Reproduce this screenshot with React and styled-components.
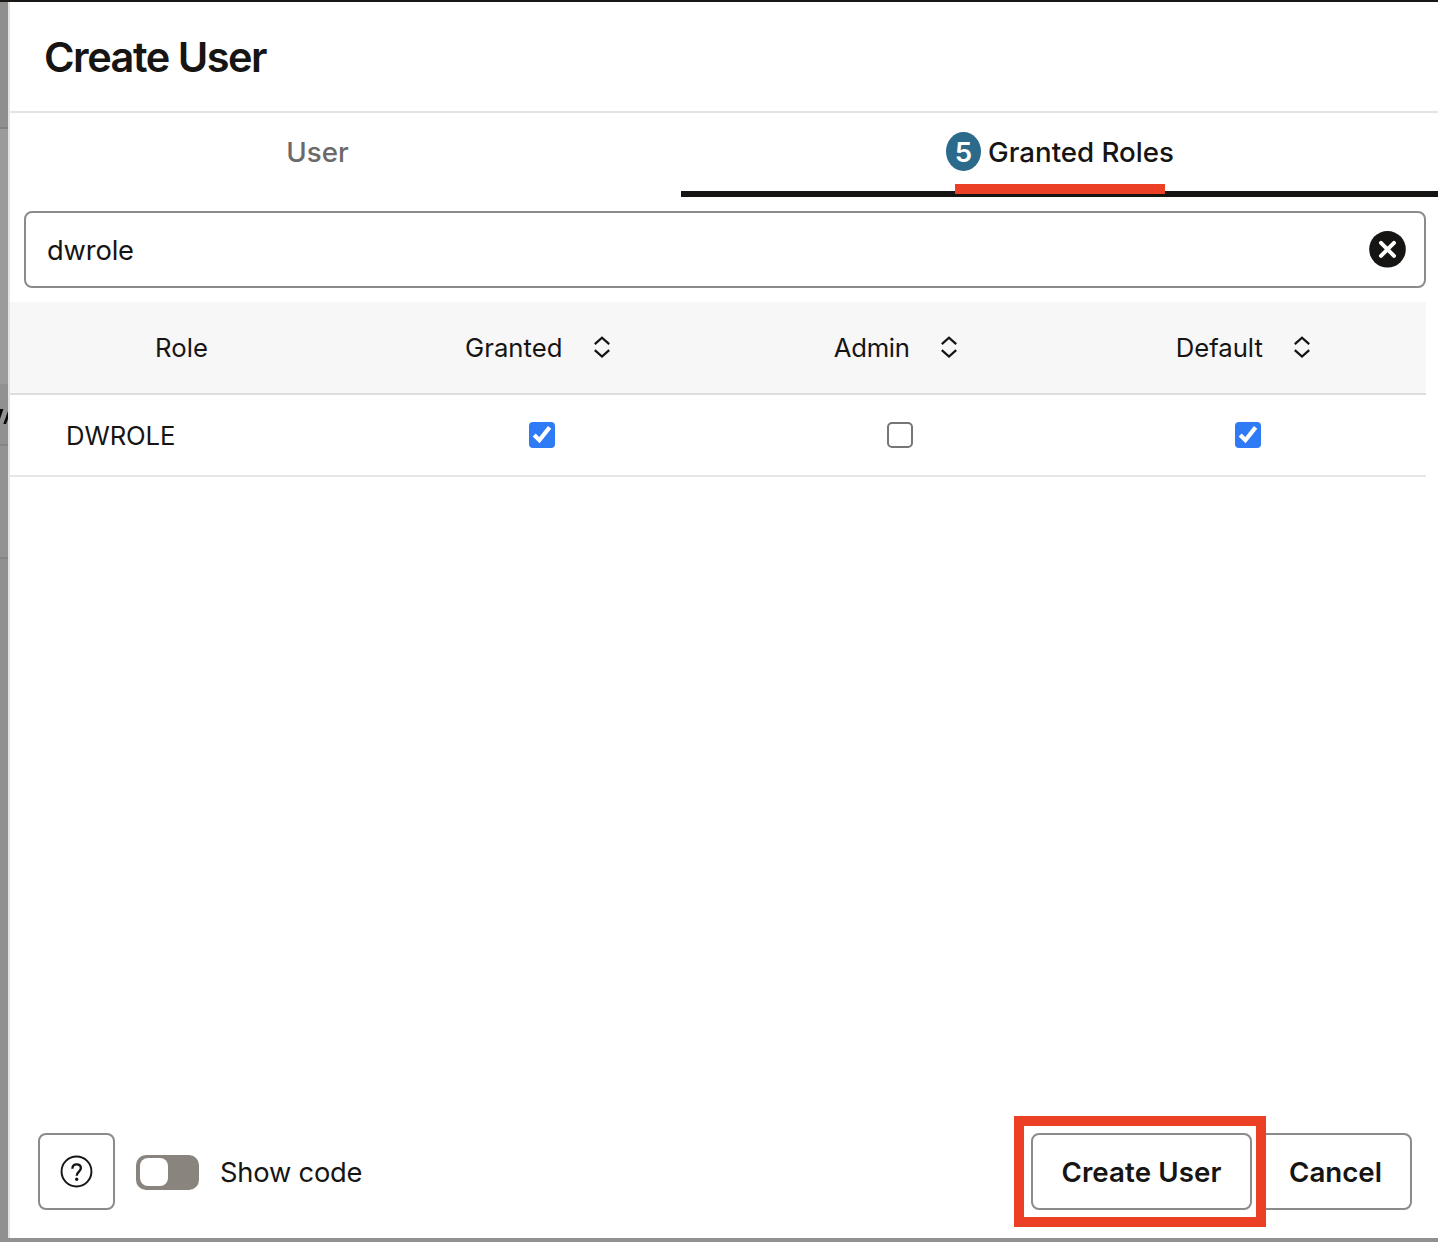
import React, { useState } from "react";
import styled, { createGlobalStyle } from "styled-components";

const ink = "#161513";
const outline = "#8b8b8b";
const marker = "#ec4026";

const GlobalStyle = createGlobalStyle`
  *, *::before, *::after { box-sizing: border-box; }
  html, body { margin: 0; padding: 0; overflow: hidden; }
  body { font-family: Inter, "Liberation Sans", sans-serif; color: ${ink}; }
  button, input { font: inherit; color: inherit; }
`;

const Screen = styled.div`
  display: flex;
  width: 1438px;
  height: 1242px;
  border-top: 2px solid #1a1816;
  border-bottom: 4px solid #919191;
  background: #fff;
`;

const Backdrop = styled.aside`
  display: flex;
  flex-direction: column;
  flex: 0 0 8px;
  overflow: hidden;
`;

const Strip = styled.div`
  flex: 0 0 ${(p) => p.$height}px;
  background: ${(p) => p.$color};
  border-bottom: ${(p) => (p.$line ? `2px solid ${p.$line}` : "none")};
  overflow: hidden;
`;

const ClippedLabel = styled.svg`
  display: block;
  margin-top: 23px;
`;

const Drawer = styled.main`
  display: flex;
  flex-direction: column;
  flex: 1;
  min-width: 0;
  border-left: 2px solid #e4e4e4;
`;

const Header = styled.header`
  display: flex;
  align-items: center;
  height: 111px;
  padding: 0 34px;
  border-bottom: 2px solid #e4e4e4;
`;

const Title = styled.h1`
  margin: 0;
  font-size: 41.5px;
  font-weight: 600;
  line-height: 50px;
  letter-spacing: -1.5px;
`;

const Tabs = styled.nav`
  display: flex;
  height: 84px;
`;

const Tab = styled.button`
  display: flex;
  align-items: flex-start;
  justify-content: center;
  gap: 7px;
  flex: 0 0 ${(p) => p.$width}px;
  padding: 19px ${(p) => p.$trail || 0}px 0 ${(p) => p.$lead || 0}px;
  border: 0;
  border-bottom: 6px solid ${(p) => (p.$active ? ink : "transparent")};
  background: none;
  color: ${(p) => (p.$active ? ink : "#6b6a69")};
  font-size: 27.7px;
  font-weight: 500;
  line-height: 41px;
  position: relative;
  white-space: nowrap;
`;

const Count = styled.span`
  width: 35px;
  height: 39px;
  border-radius: 50%;
  background: #2c6a8c;
  color: #fff;
  text-align: center;
  font-weight: 600;
`;

const Underscore = styled.span`
  position: absolute;
  left: 274px;
  bottom: -3px;
  width: 210px;
  height: 10px;
  background: ${marker};
`;

const SearchBox = styled.label`
  display: flex;
  align-items: center;
  height: 77px;
  margin: 14px 12px 14px 14px;
  padding: 0 18px 0 21px;
  border: 2px solid ${outline};
  border-radius: 8px;
`;

const SearchInput = styled.input`
  flex: 1;
  padding: 2px 0 0;
  border: 0;
  outline: 0;
  background: none;
  font-size: 27.3px;
  line-height: 40px;
  letter-spacing: -0.15px;
`;

const PlainButton = styled.button`
  display: flex;
  padding: 0 0 1px;
  border: 0;
  background: none;
`;

const Table = styled.section`
  margin-right: 12px;
`;

const Row = styled.div`
  display: grid;
  grid-template-columns: 342px 380px 336px 358px;
  align-items: center;
  height: ${(p) => (p.$head ? 93 : 82)}px;
  border-bottom: 2px solid ${(p) => (p.$head ? "#dedede" : "#e6e6e6")};
  background: ${(p) => (p.$head ? "#f7f7f7" : "#fff")};
  font-size: 25.7px;
  line-height: 36px;
`;

const HeadCell = styled.div`
  display: flex;
  align-items: center;
  justify-content: center;
  gap: 30.5px;
  padding-left: 1px;
  padding-right: ${(p) => p.$trail || 0}px;
  letter-spacing: ${(p) => p.$track || 0}px;

  svg {
    margin-bottom: 1px;
  }
`;

const NameCell = styled.div`
  padding: 2px 0 0 56px;
  letter-spacing: -0.1px;
`;

const CheckCell = styled.div`
  display: flex;
  justify-content: center;
  padding-left: ${(p) => p.$nudge || 0}px;
`;

const CheckBox = styled.button`
  display: flex;
  width: 26px;
  height: 26px;
  padding: 0;
  border: ${(p) => (p.$on ? "0" : "2px solid #767676")};
  border-radius: ${(p) => (p.$on ? 4 : 5)}px;
  background: ${(p) => (p.$on ? "#2f7bf6" : "#fff")};
`;

const Footer = styled.footer`
  display: flex;
  align-items: center;
  height: 77px;
  margin: auto 26px 28px 28px;
`;

const Button = styled.button`
  display: flex;
  align-items: center;
  justify-content: center;
  width: ${(p) => p.$width}px;
  height: 77px;
  padding: 0;
  border: 2px solid ${outline};
  border-radius: 8px;
  background: #fff;
  font-size: 27.7px;
  font-weight: 600;
  line-height: 34px;
  letter-spacing: ${(p) => p.$track || 0}px;
  white-space: nowrap;
`;

const Switch = styled.button`
  display: flex;
  align-items: center;
  width: 63px;
  height: 35px;
  margin: 1px 21px 0;
  padding: 0 4px;
  border: 0;
  border-radius: 10px;
  background: #8a847f;
`;

const Knob = styled.span`
  width: 28px;
  height: 28px;
  border-radius: 8px;
  background: #fff;
`;

const SwitchLabel = styled.span`
  padding-top: 2px;
  font-size: 27.3px;
  line-height: 40px;
  letter-spacing: -0.2px;
`;

const Actions = styled.div`
  display: flex;
  gap: 7px;
  margin-left: auto;
`;

const Callout = styled.div`
  position: relative;
  z-index: 1;
  &::after {
    content: "";
    position: absolute;
    inset: -17px -14px -17px -17px;
    border: 10px solid ${marker};
    pointer-events: none;
  }
`;

const SortIcon = () => (
  <svg width="18" height="24" viewBox="0 0 18 24" fill="none" stroke={ink} strokeWidth="2.3">
    <path d="M1.8 9.1 9 2.7l7.2 6.4M1.8 15.1 9 21.5l7.2-6.4" />
  </svg>
);

const TickIcon = () => (
  <svg width="26" height="26" viewBox="0 0 26 26" fill="none" stroke="#fff" strokeWidth="4.2">
    <path d="m5.2 13 5.2 5.2L20.6 5.4" />
  </svg>
);

const ClearIcon = () => (
  <svg width="37" height="37" viewBox="0 0 37 37">
    <circle cx="18.5" cy="18.3" r="18.3" fill={ink} />
    <path d="m12 11.8 13 13m0-13-13 13" stroke="#fff" strokeWidth="4" strokeLinecap="round" />
  </svg>
);

const HelpIcon = () => (
  <svg width="33" height="33" viewBox="0 0 34 34" fill="none" stroke={ink}>
    <circle cx="17" cy="17" r="15.4" strokeWidth="2" />
    <path d="M12.8 14.2c0-2.7 1.8-4.5 4.4-4.5 2.5 0 4.3 1.6 4.3 4 0 3.3-4.3 3.5-4.3 7.6" strokeWidth="2.4" />
    <circle cx="17.2" cy="25" r="1.7" fill={ink} stroke="none" />
  </svg>
);

const columns = [
  { name: "Granted", trail: 9, track: 0 },
  { name: "Admin", trail: 9, track: -0.3 },
  { name: "Default", trail: 8, track: 0 },
];

export default function App() {
  const [query, setQuery] = useState("dwrole");
  const [checks, setChecks] = useState([true, false, true]);
  const toggle = (i) => setChecks(checks.map((c, n) => (n === i ? !c : c)));

  return (
    <>
      <GlobalStyle />
      <Screen>
        <Backdrop>
          <Strip $height={127} $color="#918f8d" $line="#828181" />
          <Strip $height={255} $color="#9b9b9b" />
          <Strip $height={62} $color="#919191" $line="#858585">
            <ClippedLabel width="8" height="18" viewBox="0 0 8 18">
              <path d="M0 2h3.4L0 12zM3.3 17 8 4v8l-2 5z" fill="#080808" />
            </ClippedLabel>
          </Strip>
          <Strip $height={113} $color="#959391" $line="#858585" />
          <Strip $height={679} $color="#919090" />
        </Backdrop>
        <Drawer>
          <Header>
            <Title>Create User</Title>
          </Header>
          <Tabs>
            <Tab $width={671} $trail={56}>User</Tab>
            <Tab $width={757} $lead={1} $active>
              <Count>5</Count>
              <span>Granted Roles</span>
              <Underscore />
            </Tab>
          </Tabs>
          <SearchBox>
            <SearchInput value={query} onChange={(e) => setQuery(e.target.value)} />
            <PlainButton aria-label="Clear" onClick={() => setQuery("")}>
              <ClearIcon />
            </PlainButton>
          </SearchBox>
          <Table>
            <Row $head>
              <HeadCell>Role</HeadCell>
              {columns.map((c) => (
                <HeadCell key={c.name} $trail={c.trail} $track={c.track}>
                  <span>{c.name}</span>
                  <SortIcon />
                </HeadCell>
              ))}
            </Row>
            <Row>
              <NameCell>DWROLE</NameCell>
              {checks.map((on, i) => (
                <CheckCell key={i} $nudge={i === 2 ? 2 : 0}>
                  <CheckBox $on={on} onClick={() => toggle(i)}>{on && <TickIcon />}</CheckBox>
                </CheckCell>
              ))}
            </Row>
          </Table>
          <Footer>
            <Button $width={77} aria-label="Help">
              <HelpIcon />
            </Button>
            <Switch aria-label="Show code">
              <Knob />
            </Switch>
            <SwitchLabel>Show code</SwitchLabel>
            <Actions>
              <Callout>
                <Button $width={221} $track={0.1}>Create User</Button>
              </Callout>
              <Button $width={153}>Cancel</Button>
            </Actions>
          </Footer>
        </Drawer>
      </Screen>
    </>
  );
}
